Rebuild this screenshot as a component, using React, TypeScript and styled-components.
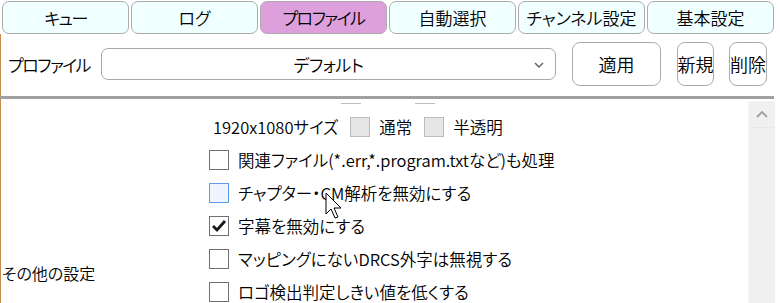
import React from 'react';
import styled, { createGlobalStyle } from 'styled-components';

const GlobalStyle = createGlobalStyle`
    body {
        margin: 0;
        background: #ffffff;
        font-family: "Noto Sans CJK JP", "Noto Sans", sans-serif;
        font-feature-settings: "palt";
        font-weight: 350;
        color: #000000;
    }
`;

const tabs = [
    { label: 'キュー', tight: true },
    { label: 'ログ' },
    { label: 'プロファイル', tight: true },
    { label: '自動選択' },
    { label: 'チャンネル設定' },
    { label: '基本設定' },
];

interface IOption {
    label: string;
    checked?: boolean;
    hover?: boolean;
}

const options: IOption[] = [
    { label: '関連ファイル(*.err,*.program.txtなど)も処理' },
    { label: 'チャプター・CM解析を無効にする', hover: true },
    { label: '字幕を無効にする', checked: true },
    { label: 'マッピングにないDRCS外字は無視する' },
    { label: 'ロゴ検出判定しきい値を低くする' },
    { label: 'ロゴ検出失敗時も処理を続行する' },
    { label: 'ロゴ消しを行わない' },
];

const App = () => {
    return (
        <Window>
            <GlobalStyle />
            <TabBar>
                {tabs.map((t) => (
                    <Tab key={t.label} active={t.label === 'プロファイル'} tight={t.tight}>{t.label}</Tab>
                ))}
            </TabBar>
            <Panel>
                <Toolbar>
                    <ToolLabel>プロファイル</ToolLabel>
                    <Select>
                        <span>デフォルト</span>
                        <Chevron width="10" height="6" viewBox="0 0 10 6">
                            <polyline points="1,1 5,5 9,1" fill="none" stroke="#606060" strokeWidth="1.4" />
                        </Chevron>
                    </Select>
                    <ToolButton width={89} gap={16}>適用</ToolButton>
                    <ToolButton width={37} gap={16}>新規</ToolButton>
                    <ToolButton width={38} gap={15}>削除</ToolButton>
                </Toolbar>
                <Divider />
                <Body>
                    <Viewport>
                        {/* scrolled a little: only the bottom edge of the previous row shows */}
                        <ScrollContent offset={26}>
                            <Group>
                                <GroupLabel>その他の設定</GroupLabel>
                                <ItemList>
                                    <SizeRow>
                                        <SizeText>1280x720サイズ</SizeText>
                                        <Box disabled />
                                        <BoxText>通常</BoxText>
                                        <Box disabled />
                                        <BoxText>半透明</BoxText>
                                    </SizeRow>
                                    <SizeRow>
                                        <SizeText>1920x1080サイズ</SizeText>
                                        <Box disabled />
                                        <BoxText>通常</BoxText>
                                        <Box disabled />
                                        <BoxText>半透明</BoxText>
                                    </SizeRow>
                                    {options.map((o) => (
                                        <Row key={o.label}>
                                            <Box hover={o.hover}>
                                                {o.checked && (
                                                    <svg width="16" height="14" viewBox="0 0 16 14">
                                                        <polyline points="2,7 6,11 14,2" fill="none" stroke="#1a1a1a" strokeWidth="2.8" />
                                                    </svg>
                                                )}
                                            </Box>
                                            <span>{o.label}</span>
                                        </Row>
                                    ))}
                                </ItemList>
                            </Group>
                        </ScrollContent>
                    </Viewport>
                    <ScrollBar>
                        <ScrollArrow>
                            <svg width="12" height="8" viewBox="0 0 12 8">
                                <polyline points="1,7 6,2 11,7" fill="none" stroke="#a0a0a0" strokeWidth="1.8" />
                            </svg>
                        </ScrollArrow>
                    </ScrollBar>
                </Body>
            </Panel>
            <Cursor width="18" height="28" viewBox="0 0 18 28">
                <path d="M1 1 L1 22 L6 17 L10 26 L13 25 L9 16 L16 16 Z" fill="#ffffff" stroke="#000000" strokeWidth="1" strokeLinejoin="round" />
            </Cursor>
        </Window>
    );
};

export default App;

const Window = styled.div`
    position: relative;
    width: 780px;
    height: 303px;
    overflow: hidden;
    background: #ffffff;
`;

const TabBar = styled.div`
    display: grid;
    grid-template-columns: repeat(6, 1fr);
    gap: 2px;
    padding: 1px 6px 0 2px;
    height: 33px;
`;

const Tab = styled.div<{ active?: boolean; tight?: boolean }>`
    display: flex;
    align-items: center;
    justify-content: center;
    box-sizing: border-box;
    height: 33px;
    border: 1px solid #ababab;
    border-radius: 7px;
    background: ${(p) => (p.active ? '#dda0dd' : '#f0ffff')};
    font-size: 17px;
    letter-spacing: ${(p) => (p.tight ? '-1.5px' : '0')};
`;

const Panel = styled.div`
    border-left: 1px solid #c68a4c;
    height: 270px;
`;

const Toolbar = styled.div`
    display: flex;
    align-items: center;
    height: 62px;
    padding: 0 0 2px 7px;
    box-sizing: border-box;
`;

const ToolLabel = styled.div`
    width: 93px;
    font-size: 17px;
    letter-spacing: -1.5px;
`;

const Select = styled.div`
    position: relative;
    display: flex;
    align-items: center;
    justify-content: center;
    box-sizing: border-box;
    width: 455px;
    height: 32px;
    border: 1px solid #a8a8a8;
    border-radius: 7px;
    font-size: 17px;
    letter-spacing: -0.5px;
`;

const Chevron = styled.svg`
    position: absolute;
    right: 11px;
    top: 13px;
`;

const ToolButton = styled.div<{ width: number; gap: number }>`
    display: flex;
    align-items: center;
    justify-content: center;
    box-sizing: border-box;
    width: ${(p) => p.width}px;
    height: 44px;
    margin-left: ${(p) => p.gap}px;
    border: 1px solid #ababab;
    border-radius: 8px;
    background: #ffffff;
    font-size: 18px;
    white-space: nowrap;
    overflow: hidden;
`;

const Divider = styled.div`
    height: 3px;
    margin: 0 6px 0 -1px;
    background: #a0a0a0;
`;

const Body = styled.div`
    display: flex;
    height: 204px;
    padding-top: 2px;
`;

const Viewport = styled.div`
    flex: 1;
    margin-top: 2px;
    overflow: hidden;
`;

const ScrollContent = styled.div<{ offset: number }>`
    margin-top: -${(p) => p.offset}px;
`;

const Group = styled.div`
    display: grid;
    grid-template-columns: 208px 1fr;
    align-items: start;
`;

const GroupLabel = styled.div`
    padding: 184px 0 0 1px;
    font-size: 16px;
    line-height: 24px;
`;

const ItemList = styled.div`
    display: flex;
    flex-direction: column;
`;

const Row = styled.div`
    display: flex;
    align-items: center;
    gap: 9px;
    height: 33px;
    font-size: 16.5px;
    white-space: nowrap;
`;

const SizeRow = styled(Row)`
    padding-left: 4px;
    gap: 0;
`;

const SizeText = styled.span`
    margin-right: 12px;
`;

const BoxText = styled.span`
    margin: 0 12px 0 9px;
`;

const Box = styled.div<{ disabled?: boolean; hover?: boolean }>`
    display: flex;
    align-items: center;
    justify-content: center;
    box-sizing: border-box;
    width: 20px;
    height: 20px;
    flex-shrink: 0;
    border: 1px solid ${(p) => (p.disabled ? '#bcbcbc' : p.hover ? '#5a9bea' : '#707070')};
    background: ${(p) => (p.disabled ? '#e6e6e6' : p.hover ? '#eef5ff' : '#ffffff')};
`;

const ScrollBar = styled.div`
    width: 26px;
    margin-right: 5px;
    background: #f0f0f0;
    border-left: 1px solid #f6f6f6;
`;

const ScrollArrow = styled.div`
    display: flex;
    align-items: center;
    justify-content: center;
    height: 26px;
    border-bottom: 1px solid #e8e8e8;
`;

const Cursor = styled.svg`
    position: absolute;
    left: 325px;
    top: 192px;
`;
